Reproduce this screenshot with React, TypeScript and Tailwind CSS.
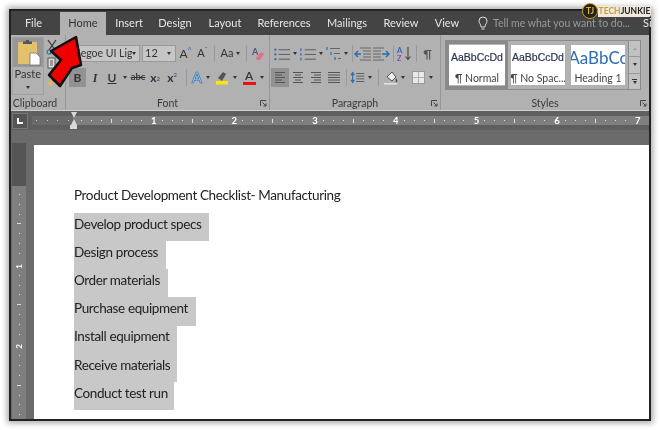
import type { ReactNode } from 'react';

const tabs = [
  { label: 'File', className: 'w-[49px] pr-[4px]' },
  { label: 'Home', className: 'w-[46px] bg-[#b1b1b1] text-[#333]' },
  { label: 'Insert', className: 'w-[46px]' },
  { label: 'Design', className: 'w-[46px]' },
  { label: 'Layout', className: 'w-[54px]' },
  { label: 'References', className: 'w-[64px]' },
  { label: 'Mailings', className: 'w-[62px]' },
  { label: 'Review', className: 'w-[46px]' },
  { label: 'View', className: 'w-[46px]' },
];

const lines = [
  { text: 'Develop product specs', className: 'w-[135px]' },
  { text: 'Design process', className: 'w-[92px]' },
  { text: 'Order materials', className: 'w-[94px]' },
  { text: 'Purchase equipment', className: 'w-[122px]' },
  { text: 'Install equipment', className: 'w-[103px]' },
  { text: 'Receive materials', className: 'w-[103px]' },
  { text: 'Conduct test run', className: 'w-[100px]' },
];

function Caret() {
  return <span className="block h-0 w-0 border-x-[2.5px] border-t-[3px] border-x-transparent border-t-[#333]" />;
}

function Cell({ className, children }: { className: string; children?: ReactNode }) {
  return <div className={`flex shrink-0 items-center justify-center ${className}`}>{children}</div>;
}

function Divider({ className = '' }: { className?: string }) {
  return <div className={`h-[17px] w-px shrink-0 bg-[#999] ${className}`} />;
}

function Launcher() {
  return (
    <svg width="7" height="7" viewBox="0 0 7 7" className="shrink-0">
      <path d="M0.5 6V0.5H6" fill="none" stroke="#444" />
      <path d="M2.5 2.5L6 6M6 3.5V6H3.5" fill="none" stroke="#444" />
    </svg>
  );
}

function Lines({ x1 = 5, widths = [12, 12, 12], color = '#666' }: { x1?: number; widths?: number[]; color?: string }) {
  return (
    <>
      {widths.map((w, i) => (
        <path key={i} d={`M${x1} ${3.5 + i * 5}h${w}`} stroke={color} strokeWidth="1.2" />
      ))}
    </>
  );
}

function Icon({ children, w = 18 }: { children: ReactNode; w?: number }) {
  return (
    <svg width={w} height="15" viewBox={`0 0 ${w} 15`}>
      {children}
    </svg>
  );
}

function Align({ widths }: { widths: number[][] }) {
  return (
    <Icon w={14}>
      {widths.map(([x, w], i) => (
        <path key={i} d={`M${x} ${2.5 + i * 2.5}h${w}`} stroke="#555" strokeWidth="1" />
      ))}
    </Icon>
  );
}

function Group({ label, className, launcher = true, children }: { label: string; className: string; launcher?: boolean; children: ReactNode }) {
  return (
    <div className={`relative flex h-full shrink-0 flex-col border-r border-[#979797] ${className}`}>
      <div className="min-h-0 flex-1">{children}</div>
      <div className="flex h-[15px] items-center justify-center pt-[2px] text-[10.5px] text-[#3a3a3a]">{label}</div>
      {launcher && (
        <div className="absolute bottom-[3px] right-[2px]">
          <Launcher />
        </div>
      )}
    </div>
  );
}

function Clipboard() {
  return (
    <div className="flex h-[60px] pl-[1px] pt-[2px]">
      <div className="flex h-[58px] w-[33px] flex-col border border-[#a0a0a0]">
        <div className="flex h-[29px] items-center justify-center bg-[#979797] pl-[4px]">
          <svg width="25" height="27" viewBox="0 0 25 27">
            <rect x="1" y="3" width="19" height="22" rx="1" fill="#e2c06e" />
            <path d="M6 5V2.5h3V1h3v1.5h3V5z" fill="#555" />
            <path d="M13 14h6l4 4v8H13z" fill="#fff" stroke="#666" strokeWidth="0.7" />
          </svg>
        </div>
        <div className="flex flex-1 flex-col items-center text-[11px] leading-[14px] text-[#333]">
          Paste
          <span className="mt-[5px]">
            <Caret />
          </span>
        </div>
      </div>
      <div className="ml-[2px] flex w-[14px] flex-col items-center">
        <svg width="12" height="16" viewBox="0 0 12 16" className="mt-[2px]">
          <path d="M2 1l7 10M10 1L3 11" stroke="#333" strokeWidth="1.2" fill="none" />
          <circle cx="3" cy="13" r="2" fill="none" stroke="#2b6cb0" strokeWidth="1.2" />
        </svg>
        <svg width="10" height="12" viewBox="0 0 10 12" className="mt-[2px]">
          <rect x="1" y="1" width="7" height="10" fill="#ddd" stroke="#555" />
          <path d="M3 4h3M3 6h3M3 8h3" stroke="#555" />
        </svg>
        <svg width="12" height="12" viewBox="0 0 12 12" className="mt-[6px]">
          <path d="M1 8l4-3 3 3-4 3z" fill="#e3b565" />
          <path d="M6 5l3-3 2 2-3 3z" fill="#444" />
        </svg>
      </div>
    </div>
  );
}

function FontGroup() {
  return (
    <div className="flex flex-col pt-[10px]">
      <div className="flex h-[17px] items-center pl-[6px]">
        <div className="flex h-[17px] w-[68px] shrink-0 items-center overflow-hidden border border-[#999] bg-[#c6c6c6] pl-[2px] text-[10.5px] text-[#333]">
          <span className="w-[57px] shrink-0 overflow-hidden whitespace-nowrap">Segoe UI Light</span>
          <Caret />
        </div>
        <div className="ml-[2px] flex h-[17px] w-[34px] shrink-0 items-center justify-between border border-[#999] bg-[#c6c6c6] px-[2px] pr-[4px] text-[11px] text-[#333]">
          12
          <Caret />
        </div>
        <Cell className="ml-[1px] w-[17px] text-[12px] text-[#333]">
          A<sup className="text-[7px] text-[#2b6cb0]">^</sup>
        </Cell>
        <Cell className="w-[17px] text-[11px] text-[#333]">
          A<sup className="text-[7px] text-[#2b6cb0]">ˇ</sup>
        </Cell>
        <Divider className="ml-[3px]" />
        <Cell className="w-[31px] gap-[3px] text-[11px] text-[#333]">
          Aa
          <Caret />
        </Cell>
        <Divider />
        <Cell className="w-[22px]">
          <Icon w={14}>
            <text x="1" y="9" fontSize="9" fontWeight="700" fill="#4a5a7a" fontFamily="Lato">A</text>
            <path d="M5 12l5-6 3 2-4 6H6z" fill="#e0708a" />
          </Icon>
        </Cell>
      </div>
      <div className="mt-[6px] flex h-[19px] items-center pl-[3px] text-[#333]">
        <Cell className="h-[19px] w-[17px] bg-[#929292] text-[12px] font-bold">B</Cell>
        <Cell className="w-[18px] font-['Liberation_Serif'] text-[12px] font-bold italic">I</Cell>
        <Cell className="w-[16px] text-[12px] font-semibold underline">U</Cell>
        <Cell className="w-[10px]"><Caret /></Cell>
        <Cell className="w-[16px] text-[9.5px] font-semibold line-through">abc</Cell>
        <Cell className="ml-px w-[16px] text-[12px] font-bold">
          x<sub className="text-[6px] text-[#2b6cb0]">2</sub>
        </Cell>
        <Cell className="ml-px w-[16px] text-[12px] font-bold">
          x<sup className="text-[6px] text-[#2b6cb0]">2</sup>
        </Cell>
        <Divider className="ml-[6px]" />
        <Cell className="ml-[3px] w-[14px] text-[15px] font-semibold leading-none text-[#9cc0e4] [-webkit-text-stroke:0.6px_#2b6cb0]">A</Cell>
        <Cell className="w-[8px]"><Caret /></Cell>
        <Cell className="ml-[2px] w-[16px]">
          <Icon w={14}>
            <path d="M3 8l5-6 3 2-4 7z" fill="#555" />
            <rect x="1" y="11" width="12" height="3.5" fill="#ffe600" />
          </Icon>
        </Cell>
        <Cell className="w-[10px]"><Caret /></Cell>
        <Cell className="ml-px w-[16px]">
          <div className="flex flex-col items-center">
            <span className="text-[12px] font-semibold leading-[11px]">A</span>
            <span className="mt-px h-[3.5px] w-[13px] bg-[#ee1111]" />
          </div>
        </Cell>
        <Cell className="w-[10px]"><Caret /></Cell>
      </div>
    </div>
  );
}

function ParagraphGroup() {
  return (
    <div className="flex flex-col pt-[10px]">
      <div className="flex h-[17px] items-center pl-[3px]">
        <Cell className="w-[17px]">
          <Icon>
            {[3.5, 8.5, 13.5].map((y) => (
              <circle key={y} cx="2.5" cy={y} r="1.2" fill="#2b6cb0" />
            ))}
            <Lines x1={6} />
          </Icon>
        </Cell>
        <Cell className="w-[9px]"><Caret /></Cell>
        <Cell className="w-[17px]">
          <Icon>
            {[3.5, 8.5, 13.5].map((y) => (
              <path key={y} d={`M2 ${y - 1.5}v3`} stroke="#2b6cb0" strokeWidth="1.2" />
            ))}
            <Lines x1={6} />
          </Icon>
        </Cell>
        <Cell className="w-[9px]"><Caret /></Cell>
        <Cell className="w-[18px]">
          <Icon>
            <path d="M2 1v3M6 6v3M10 11v3" stroke="#2b6cb0" strokeWidth="1.2" />
            <path d="M5 2.5h10M9 7.5h6M13 12.5h3" stroke="#666" strokeWidth="1.2" />
          </Icon>
        </Cell>
        <Cell className="w-[6px]"><Caret /></Cell>
        <Divider className="ml-[3px]" />
        <Cell className="ml-[1px] w-[18px]">
          <Icon>
            <path d="M6 2h11M9 5h8M9 8h8M9 11h8M6 14h11" stroke="#666" />
            <path d="M1 8h6M4 5L1 8l3 3" stroke="#2b6cb0" strokeWidth="1.4" fill="none" />
          </Icon>
        </Cell>
        <Cell className="w-[18px]">
          <Icon>
            <path d="M1 2h11M1 5h8M1 8h8M1 11h8M1 14h11" stroke="#666" />
            <path d="M10 8h7M14 5l3 3-3 3" stroke="#2b6cb0" strokeWidth="1.4" fill="none" />
          </Icon>
        </Cell>
        <Divider className="ml-[3px]" />
        <Cell className="ml-[2px] w-[18px]">
          <Icon>
            <text x="1" y="7" fontSize="7.5" fontWeight="700" fill="#2b6cb0" fontFamily="Lato">A</text>
            <text x="1" y="14.5" fontSize="7.5" fontWeight="700" fill="#8a4fb5" fontFamily="Lato">Z</text>
            <path d="M12 1v12M9.5 10.5L12 13.5l2.5-3" stroke="#444" fill="none" strokeWidth="1.1" />
          </Icon>
        </Cell>
        <Divider className="ml-[2px]" />
        <Cell className="w-[21px] text-[12px] font-semibold text-[#555]">¶</Cell>
      </div>
      <div className="mt-[6px] flex h-[19px] items-center pl-[1px]">
        <Cell className="h-[19px] w-[18px] bg-[#929292]">
          <Align widths={[[2, 10], [2, 7], [2, 10], [2, 7], [2, 10]]} />
        </Cell>
        <Cell className="w-[18px]">
          <Align widths={[[2, 10], [4, 6], [2, 10], [4, 6], [2, 10]]} />
        </Cell>
        <Cell className="w-[18px]">
          <Align widths={[[2, 10], [5, 7], [2, 10], [5, 7], [2, 10]]} />
        </Cell>
        <Cell className="w-[18px]">
          <Align widths={[[1, 12], [1, 12], [1, 12], [1, 12], [1, 12]]} />
        </Cell>
        <Divider className="ml-[3px]" />
        <Cell className="ml-[3px] w-[16px]">
          <Icon>
            <path d="M3 3v9M1 5l2-3 2 3M1 10l2 3 2-3" stroke="#2b6cb0" fill="none" strokeWidth="1.3" />
            <path d="M7 3h9M7 6h9M7 9h9M7 12h9" stroke="#555" />
          </Icon>
        </Cell>
        <Cell className="w-[8px]"><Caret /></Cell>
        <Divider className="ml-[4px]" />
        <Cell className="ml-[3px] w-[18px]">
          <Icon w={16}>
            <path d="M4 7l5-5 4 5-4 4z" fill="#eee" stroke="#555" />
            <path d="M13 8c1 2 2 3 1 4s-2-1-1-4z" fill="#444" />
            <rect x="1" y="13" width="13" height="1.6" fill="#e0e0e0" />
          </Icon>
        </Cell>
        <Cell className="w-[6px]"><Caret /></Cell>
        <Cell className="ml-[3px] w-[18px]">
          <div className="grid h-[11px] w-[11px] grid-cols-2 gap-px bg-[#b1b1b1] outline outline-1 outline-[#999]">
            <span className="bg-[#e9e9e9]" />
            <span className="bg-[#e9e9e9]" />
            <span className="bg-[#e9e9e9]" />
            <span className="bg-[#e9e9e9]" />
          </div>
        </Cell>
        <Cell className="w-[8px]"><Caret /></Cell>
      </div>
    </div>
  );
}

function StyleCard({ sample, name, className }: { sample: ReactNode; name: string; className: string }) {
  return (
    <div className={`flex h-[40px] shrink-0 flex-col items-center overflow-hidden whitespace-nowrap bg-white ${className}`}>
      <div className="flex h-[26px] items-center">{sample}</div>
      <div className="text-[10.5px] leading-[14px] text-[#444]">{name}</div>
    </div>
  );
}

function StylesGroup() {
  const sample = "font-['Liberation_Sans'] text-[10.5px] text-[#2c3550] [-webkit-text-stroke:0.2px_#2c3550]";
  return (
    <div className="flex pl-[4px] pt-[5px]">
      <div className="flex h-[50px] w-[184px] shrink-0 items-center border border-[#8c8c8c]">
        <div className="flex h-[48px] w-[62px] shrink-0 items-center justify-center border-[3px] border-[#8a8a8a] bg-[#b8b8b8]">
          <StyleCard className="w-[56px]" name="¶ Normal" sample={<span className={sample}>AaBbCcDd</span>} />
        </div>
        <StyleCard className="ml-[3px] w-[54px]" name="¶ No Spac..." sample={<span className={sample}>AaBbCcDd</span>} />
        <StyleCard
          className="ml-[6px] w-[54px]"
          name="Heading 1"
          sample={<span className="text-[17px] text-[#2e6db4]">AaBbCc</span>}
        />
      </div>
      <div className="flex h-[50px] w-[12px] shrink-0 flex-col border-y border-r border-[#8c8c8c] bg-[#c2c2c2]">
        <Cell className="flex-1 border-b border-[#999]">
          <span className="block h-0 w-0 border-x-[2px] border-b-[2px] border-x-transparent border-b-[#999]" />
        </Cell>
        <Cell className="flex-1 border-b border-[#999]"><Caret /></Cell>
        <Cell className="flex-1">
          <div className="flex flex-col items-center gap-px">
            <span className="h-px w-[5px] bg-[#333]" />
            <Caret />
          </div>
        </Cell>
      </div>
    </div>
  );
}

function HRuler() {
  return (
    <div className="flex h-[19px] shrink-0 items-center bg-[#5f5f5f]">
      <div className="ml-px flex h-[16px] w-[16px] items-center justify-center border border-[#777] bg-[#555]">
        <span className="h-[6px] w-[6px] border-b-2 border-l-2 border-white" />
      </div>
      <div className="relative ml-[4px] flex h-[9px] flex-1 bg-[#7f7f7f]">
        <div className="flex w-[41px] shrink-0 items-center justify-between bg-[#6a6a6a] px-[4px]">
          {[0, 1, 2, 3].map((i) => (
            <span key={i} className="h-px w-px bg-[#ccc]" />
          ))}
        </div>
        <div className="flex">
          {[1, 2, 3, 4, 5, 6, 7].map((n) => (
            <div key={n} className="flex w-[80.7px] shrink-0 items-center justify-between pl-[8px]">
              {[0, 1, 2].map((i) => <span key={i} className="h-px w-px bg-[#ddd]" />)}
              <span className="h-[4px] w-px bg-[#ddd]" />
              {[0, 1, 2].map((i) => <span key={i} className="h-px w-px bg-[#ddd]" />)}
              <span className="-mr-[3px] w-[6px] text-center text-[9.5px] leading-none font-bold text-white">{n}</span>
            </div>
          ))}
        </div>
        <div className="absolute left-[38px] top-[-4px] flex flex-col items-center">
          <span className="h-0 w-0 border-x-[3.5px] border-t-[6px] border-x-transparent border-t-[#d8d8d8]" />
          <span className="mt-[1px] h-0 w-0 border-x-[3.5px] border-b-[6px] border-x-transparent border-b-[#d8d8d8]" />
          <span className="h-[4px] w-[7px] bg-[#d8d8d8]" />
        </div>
      </div>
    </div>
  );
}

function VRuler() {
  return (
    <div className="ml-px mt-[13px] flex w-[14px] shrink-0 flex-col self-stretch">
      <div className="h-[43px] shrink-0 bg-[#555]" />
      <div className="flex flex-1 flex-col overflow-hidden bg-[#7f7f7f]">
        {[1, 2, 3].map((n) => (
          <div key={n} className="flex h-[80.7px] shrink-0 flex-col items-center justify-between pt-[8px]">
            {[0, 1, 2].map((i) => <span key={i} className="h-px w-px bg-[#ddd]" />)}
            <span className="h-px w-[4px] bg-[#ddd]" />
            {[0, 1, 2].map((i) => <span key={i} className="h-px w-px bg-[#ddd]" />)}
            <span className="-mb-[3px] h-[7px] -rotate-90 text-[8px] leading-[7px] font-bold text-white">{n}</span>
          </div>
        ))}
      </div>
    </div>
  );
}

export default function App() {
  return (
    <div className="h-[430px] w-[660px] overflow-hidden bg-white pl-[9px] pt-[9px] font-['Lato',sans-serif] blur-[0.4px]">
      <div className="relative flex h-[412px] w-[642px] flex-col border-2 border-[#222] bg-[#6b6b6b] shadow-[0_0_6px_2px_rgba(0,0,0,0.35)]">
        <div className="flex h-[24px] shrink-0 items-end bg-[#444] text-[#e6e6e6]">
          {tabs.map((tab) => (
            <div key={tab.label} className={`flex h-[23px] shrink-0 items-center justify-center text-[11px] ${tab.className}`}>
              {tab.label}
            </div>
          ))}
          <div className="ml-[8px] flex h-[23px] shrink-0 items-center gap-[5px] text-[10.5px] text-[#9a9a9a]">
            <svg width="10" height="15" viewBox="0 0 10 15">
              <path d="M3 11C3 8 1 7.500 1 5a4 4 0 0 1 8 0c0 2.500-2 3-2 6z" fill="none" stroke="#ddd" />
              <path d="M3.500 13h3" stroke="#ddd" />
            </svg>
            <span className="w-[135px] whitespace-nowrap">Tell me what you want to do...</span>
          </div>
          <div className="ml-[15px] flex h-[23px] items-center text-[11px]">Si</div>
        </div>

        <div className="flex h-[76px] shrink-0 border-b border-[#d0d0d0] bg-[#b1b1b1]">
          <Group label="Clipboard" className="w-[55px] pr-[6px]" launcher={false}>
            <Clipboard />
          </Group>
          <Group label="Font" className="w-[204px]">
            <FontGroup />
          </Group>
          <Group label="Paragraph" className="w-[171px]">
            <ParagraphGroup />
          </Group>
          <Group label="Styles" className="flex-1 border-r-0">
            <StylesGroup />
          </Group>
        </div>

        <HRuler />

        <div className="flex min-h-0 flex-1">
          <VRuler />
          <div className="ml-[8px] mt-[15px] flex-1 bg-white pl-[40px] pt-[32px] text-[13.5px] tracking-[-0.38px] text-[#222]">
            <div className="flex h-[36px] items-center whitespace-nowrap">Product Development Checklist- Manufacturing</div>
            {lines.map((line) => (
              <div key={line.text} className={`flex h-[28.14px] items-center whitespace-nowrap bg-[#c8c8c8] pb-[6px] ${line.className}`}>
                {line.text}
              </div>
            ))}
          </div>
        </div>

        <svg width="40" height="56" viewBox="0 0 40 56" className="absolute left-[35px] top-[23px]">
          <path d="M30 3L5 17L15 26L3 41L14 52L26 34L35 31z" fill="#ee0000" stroke="#111" strokeWidth="2.500" strokeLinejoin="round" />
        </svg>

        <div className="absolute -right-[2px] -top-[8px] flex items-center">
          <svg width="16" height="16" viewBox="0 0 17 17" className="relative z-10">
            <circle cx="8.500" cy="8.500" r="8" fill="#222" stroke="#d8a21a" />
            <text x="8.500" y="12" textAnchor="middle" fontSize="9" fontWeight="700" fill="#e8b020" fontFamily="Lato">TJ</text>
          </svg>
          <div className="flex h-[11px] w-[53px] items-center justify-center whitespace-nowrap rounded-r-[2px] bg-[#eee9dc] text-[8.5px] font-bold">
            <span className="text-[#d49a2a]">TECH</span>
            <span className="text-[#222]">JUNKIE</span>
          </div>
        </div>
      </div>
    </div>
  );
}
